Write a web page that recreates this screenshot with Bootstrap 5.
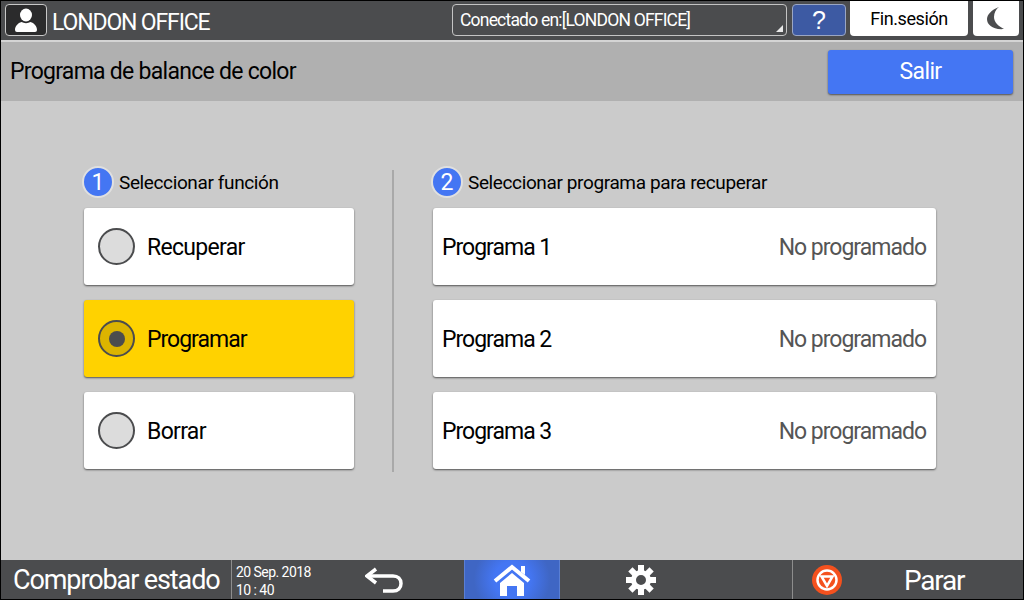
<!DOCTYPE html>
<html lang="es">
<head>
<meta charset="utf-8">
<title>Programa de balance de color</title>
<link rel="stylesheet" href="https://cdn.jsdelivr.net/npm/bootstrap@5.3.0/dist/css/bootstrap.min.css">
<style>
html,body{height:600px;overflow:hidden}
body{font-family:Roboto,"Noto Sans",sans-serif;background:#000;color:#000}
.shell{width:1024px;height:600px;border:solid #000;border-width:0 1px 1px;display:flex;flex-direction:column;background:#cbcbcb}
.topbar{height:42px;background:#4b4c4e;border-bottom:2px solid #d4d4d4;color:#fff;padding:0 4px 0 4px;flex:none;border-top:1px solid #000}
.userbtn{width:42px;height:32px;background:#2b2b2c;border:1px solid #c8c8c8;border-radius:4px;margin-top:3px}
.office{font-size:23px;letter-spacing:-1.15px;margin-left:5px;line-height:1;margin-top:3px}
.conn{width:335px;height:32px;border:1px solid #c4c4c4;border-radius:4px;margin-left:auto;margin-top:3px;font-size:17.5px;letter-spacing:-.8px;padding:2px 0 0 7px;position:relative;line-height:1}
.corner{position:absolute;right:3px;bottom:3px;width:0;height:0;border-style:solid;border-width:0 0 7px 7px;border-color:transparent transparent #e8e8e8 transparent}
.helpbtn{width:54px;height:32px;background:#3d5aa3;border:1px solid #9aa6c4;border-radius:4px;margin:3px 0 0 5px;font-family:"Liberation Sans",sans-serif;font-size:25px;line-height:1}
.whitebtn{background:#fff;color:#000;height:35px;border-radius:0 0 4px 4px;font-size:18px;letter-spacing:-.4px;line-height:1}
.endbtn{width:118px;margin-left:4px}
.moonbtn{width:46px;margin-left:5px}
.titlebar{height:59px;background:#b0b0b0;flex:none;padding:0 10px 0 9px}
.ttl{font-size:23px;letter-spacing:-.72px;line-height:1}
.exitbtn{width:185px;height:44px;background:#4476f3;color:#fff;border-radius:3px;font-size:23px;letter-spacing:-.6px;box-shadow:0 1px 2px rgba(0,0,0,.55);line-height:1}
.mainarea{flex:1 1 auto;padding:65px 0 0 81px;min-height:0}
.leftcol{width:272px;margin-right:38px}
.sep{width:2px;background:#a9a9a9;height:302px;margin:4px 37px 0 0}
.rightcol{width:505px}
.head{height:32px;margin-bottom:10px;line-height:1}
.numdot{width:32px;height:32px;border-radius:50%;background:#4476f3;border:2px solid #e0e0e0;color:#fff;font-size:23px;flex:none;line-height:1}
.headtxt{font-size:19px;letter-spacing:-.38px;margin-left:5px}
.opt{height:77px;background:#fff;border-radius:3px;box-shadow:0 1px 2px rgba(0,0,0,.6);margin:0 0 15px 2px;font-size:23px;letter-spacing:-.68px;line-height:1}
.rightcol .opt{padding:0 10px 0 9px;letter-spacing:-1px}
.leftcol .opt{padding-left:14px;width:270px}
.leftcol .opt.sel{background:#ffd200;letter-spacing:-1px}
.optlabel{padding-top:2px}
.radio-o{width:37px;height:37px;border-radius:50%;border:2px solid #4b4c4e;background:#dcdcdc;margin-right:12px;flex:none}
.sel .radio-o{background:#dcb400}
.radio-i{width:16px;height:16px;border-radius:50%;background:#4b4c4e}
.muted{color:#555}
.botbar{height:39px;background:#4b4c4e;color:#fff;flex:none;line-height:1}
.status{width:231px;font-size:27px;letter-spacing:-1.1px;white-space:nowrap;padding:2px 0 0 12px;height:100%;border-right:1px solid #8d8d8d}
.clock{width:133px;font-size:14px;letter-spacing:-.55px;padding:3px 0 0 4px;height:100%;line-height:18px}
.backcell{width:99px;height:100%}
.homecell{width:96px;height:100%;background:radial-gradient(circle,#4476f3 35%,#3f66c4 75%);border:solid #5a7fd4;border-width:0 1px}
.gearcell{width:233px;height:100%;border-right:1px solid #8d8d8d;padding-left:66px}
.stopcell{flex:1;height:100%;padding-left:19px}
.stoptxt{font-size:28px;letter-spacing:-1.2px;margin-left:62px;padding-top:2px}
</style>
</head>
<body>
<div class="shell">
  <div class="topbar d-flex align-items-start">
    <div class="userbtn d-flex align-items-center justify-content-center">
      <svg width="22" height="24" viewBox="0 0 22 24" fill="#fff"><ellipse cx="11" cy="7" rx="6" ry="6.500"/><path d="M0 22c0-4 3-7 6.500-8 2.500 1.500 6.500 1.500 9 0 3.500 1 6.500 4 6.500 8q0 2-2 2H2q-2 0-2-2z"/></svg>
    </div>
    <div class="office align-self-center">LONDON OFFICE</div>
    <div class="conn d-flex align-items-center">Conectado en:[LONDON OFFICE]<span class="corner"></span></div>
    <div class="helpbtn d-flex align-items-center justify-content-center">?</div>
    <div class="whitebtn endbtn d-flex align-items-center justify-content-center">Fin.sesión</div>
    <div class="whitebtn moonbtn d-flex align-items-center justify-content-center">
      <svg width="18" height="23" viewBox="0 0 18 23" fill="#4b4c4e"><path d="M12 0C4 3 0 8 0 12c0 6 6 11 17 10C11 19 7 15 7 10 7 6 9 2 12 0z"/></svg>
    </div>
  </div>
  <div class="titlebar d-flex align-items-center justify-content-between">
    <div class="ttl">Programa de balance de color</div>
    <div class="exitbtn d-flex align-items-center justify-content-center">Salir</div>
  </div>
  <div class="mainarea d-flex">
    <div class="leftcol">
      <div class="head d-flex align-items-center"><span class="numdot d-flex align-items-center justify-content-center">1</span><span class="headtxt">Seleccionar función</span></div>
      <div class="opt d-flex align-items-center"><span class="radio-o"></span><span class="optlabel">Recuperar</span></div>
      <div class="opt sel d-flex align-items-center"><span class="radio-o d-flex align-items-center justify-content-center"><span class="radio-i"></span></span><span class="optlabel">Programar</span></div>
      <div class="opt d-flex align-items-center"><span class="radio-o"></span><span class="optlabel">Borrar</span></div>
    </div>
    <div class="sep"></div>
    <div class="rightcol">
      <div class="head d-flex align-items-center"><span class="numdot d-flex align-items-center justify-content-center">2</span><span class="headtxt">Seleccionar programa para recuperar</span></div>
      <div class="opt d-flex align-items-center justify-content-between"><span class="optlabel">Programa 1</span><span class="optlabel muted">No programado</span></div>
      <div class="opt d-flex align-items-center justify-content-between"><span class="optlabel">Programa 2</span><span class="optlabel muted">No programado</span></div>
      <div class="opt d-flex align-items-center justify-content-between"><span class="optlabel">Programa 3</span><span class="optlabel muted">No programado</span></div>
    </div>
  </div>
  <div class="botbar d-flex align-items-center">
    <div class="status d-flex align-items-center">Comprobar estado</div>
    <div class="clock">20 Sep. 2018<br>10 : 40</div>
    <div class="backcell d-flex align-items-center">
      <svg width="38" height="28" viewBox="0 0 38 28" fill="none" stroke="#fff" stroke-width="3.500"><path d="M2 10h26c5 0 8 3 8 7.500S33 25 28 25H18"/><path d="M11 3 2 10l9 7"/></svg>
    </div>
    <div class="homecell d-flex align-items-center justify-content-center">
      <svg width="38" height="32" viewBox="0 0 38 32"><path d="M2 17 19 3l17 14" fill="none" stroke="#fff" stroke-width="4"/><path d="M28 2h4v9l-4-3z" fill="#fff"/><path fill="#fff" fill-rule="evenodd" d="M7 19 19 9l12 10v13H7zm7 3v10h10V22z"/></svg>
    </div>
    <div class="gearcell d-flex align-items-center">
      <svg width="30" height="30" viewBox="0 0 30 30" fill="#fff"><path fill-rule="evenodd" d="M15 5a10 10 0 1 0 0 20 10 10 0 0 0 0-20zm0 5a5 5 0 1 1 0 10 5 5 0 0 1 0-10z"/><g><rect x="12" y="0" width="6" height="7"/><rect x="12" y="23" width="6" height="7"/><rect x="0" y="12" width="7" height="6"/><rect x="23" y="12" width="7" height="6"/><rect x="12" y="0" width="6" height="7" transform="rotate(45 15 15)"/><rect x="12" y="23" width="6" height="7" transform="rotate(45 15 15)"/><rect x="0" y="12" width="7" height="6" transform="rotate(45 15 15)"/><rect x="23" y="12" width="7" height="6" transform="rotate(45 15 15)"/></g></svg>
    </div>
    <div class="stopcell d-flex align-items-center">
      <svg width="30" height="30" viewBox="0 0 30 30"><circle cx="15" cy="15" r="15" fill="#f4511e"/><circle cx="15" cy="15" r="9.500" fill="none" stroke="#fff" stroke-width="2.500"/><path d="M9.500 11.500h11L15 21z" fill="none" stroke="#fff" stroke-width="2.500"/></svg>
      <span class="stoptxt">Parar</span>
    </div>
  </div>
</div>
<script src="https://cdn.jsdelivr.net/npm/bootstrap@5.3.0/dist/js/bootstrap.bundle.min.js"></script>
</body>
</html>
